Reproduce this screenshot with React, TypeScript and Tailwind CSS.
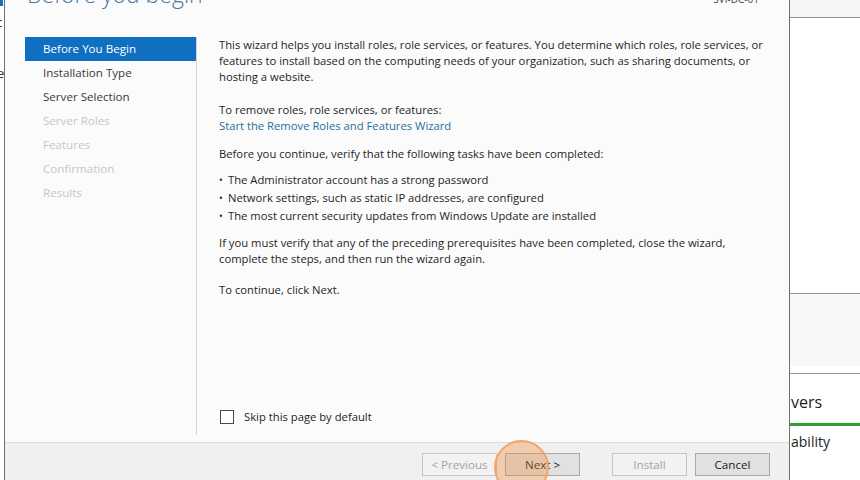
import React from "react";

const font = { fontFamily: '"Open Sans", "Noto Sans", sans-serif' };

function NavItem({ label, state }: { label: string; state: "sel" | "on" | "off" }) {
  const cls =
    state === "sel"
      ? "bg-[#0f6fc0] text-white"
      : state === "on"
      ? "text-[#3a3a3a]"
      : "text-[#c6c6c6]";
  return (
    <div className={`h-[24px] flex items-center pl-[18px] text-[11.6px] ${cls}`}>{label}</div>
  );
}

function Btn({ label, kind }: { label: string; kind: "dis" | "norm" }) {
  const cls =
    kind === "dis"
      ? "bg-[#f2f2f2] border-[#c4c4c4] text-[#a3a3a3]"
      : "bg-[#e1e1e1] border-[#a8a8a8] text-[#1a1a1a]";
  return (
    <div className={`w-[75px] h-[23px] border flex items-center justify-center text-[11.6px] ${cls}`}>
      {label}
    </div>
  );
}

export default function App() {
  return (
    <div className="w-[860px] h-[480px] relative overflow-hidden bg-white flex" style={font}>
      {/* left background strip */}
      <div className="w-[4px] h-full relative overflow-hidden bg-white">
        <div className="h-[6px] w-[3px] bg-[#1f6fb5]" />
        <div className="absolute left-[-4px] top-[13px] text-[13px] leading-[18px] text-[#333]">c</div>
        <div className="absolute left-[-3px] top-[64px] text-[13px] leading-[18px] text-[#333]">e</div>
      </div>

      {/* dialog */}
      <div className="w-[786px] h-full flex flex-col bg-[#fbfbfb] border-l border-r border-[#6f6f6f]">
        {/* header */}
        <div className="h-[37px] relative flex justify-between pl-[22px] pr-[30px] overflow-hidden">
          <div className="mt-[-24px] text-[23px] leading-[36px] font-light text-[#4c76a0]">
            Before you begin
          </div>
          <div className="mt-[-8px] text-[10px] leading-[14px] text-[#444]">SVI-DC-01</div>
        </div>
        {/* body */}
        <div className="flex-1 flex">
          <div className="w-[193px] pl-[20px] pb-[7px] flex">
            <div className="w-[172px] border-r border-[#d4d4d4] h-full">
              <NavItem label="Before You Begin" state="sel" />
              <NavItem label="Installation Type" state="on" />
              <NavItem label="Server Selection" state="on" />
              <NavItem label="Server Roles" state="off" />
              <NavItem label="Features" state="off" />
              <NavItem label="Confirmation" state="off" />
              <NavItem label="Results" state="off" />
            </div>
          </div>
          <div className="flex-1 pl-[21px] pr-[10px] flex flex-col text-[11.25px] leading-[16px] text-[#1e1e1e] whitespace-nowrap">
            <p>
              This wizard helps you install roles, role services, or features. You determine which roles, role services, or
              <br />
              features to install based on the computing needs of your organization, such as sharing documents, or
              <br />
              hosting a website.
            </p>
            <p className="mt-[17px]">
              To remove roles, role services, or features:
              <br />
              <span className="text-[#2a6e9c]">Start the Remove Roles and Features Wizard</span>
            </p>
            <p className="mt-[12px]">Before you continue, verify that the following tasks have been completed:</p>
            <ul className="mt-[9px]">
              {[
                "The Administrator account has a strong password",
                "Network settings, such as static IP addresses, are configured",
                "The most current security updates from Windows Update are installed",
              ].map((t) => (
                <li key={t} className="h-[18px] flex items-center">
                  <span className="w-[9px] text-[10px]">•</span>
                  {t}
                </li>
              ))}
            </ul>
            <p className="mt-[10px]">
              If you must verify that any of the preceding prerequisites have been completed, close the wizard,
              <br />
              complete the steps, and then run the wizard again.
            </p>
            <p className="mt-[15px]">To continue, click Next.</p>
            <div className="flex-1" />
            <div className="flex items-center mb-[17px]">
              <div className="w-[14px] h-[14px] border border-[#4a4a4a] bg-white ml-[1px]" />
              <span className="ml-[10px]">Skip this page by default</span>
            </div>
          </div>
        </div>
        {/* footer */}
        <div className="h-[38px] border-t border-[#dcdcdc] bg-[#f0f0f0] flex justify-end items-start pt-[10px] pr-[19px]">
          <Btn label="< Previous" kind="dis" />
          <div className="w-[8px]" />
          <Btn label="Next >" kind="norm" />
          <div className="w-[32px]" />
          <Btn label="Install" kind="dis" />
          <div className="w-[8px]" />
          <Btn label="Cancel" kind="norm" />
        </div>
      </div>

      {/* right background */}
      <div className="flex-1 h-full flex flex-col bg-white overflow-hidden">
        <div className="h-[18px] bg-[#f5f5f5] border-b border-[#8f8f8f]" />
        <div className="h-[276px] bg-white border-b border-[#9a9a9a]" />
        <div className="h-[72px] bg-[#f7f7f7]" />
        <div className="h-[8px] bg-white border-b border-[#9a9a9a]" />
        <div className="pl-[1px] mt-[18px] text-[16px] leading-[20px] text-[#222] whitespace-nowrap">vers</div>
        <div className="mt-[11px] h-[3px] bg-[#2ea02e]" />
        <div className="pl-[1px] mt-[7px] text-[14px] leading-[18px] text-[#222] whitespace-nowrap">ability</div>
      </div>

      {/* highlight circle overlay */}
      <div className="absolute left-[494px] top-[440px] w-[55px] h-[55px] rounded-full border-2 border-[#f3a66a] bg-[rgba(240,140,60,0.35)]" />
    </div>
  );
}
